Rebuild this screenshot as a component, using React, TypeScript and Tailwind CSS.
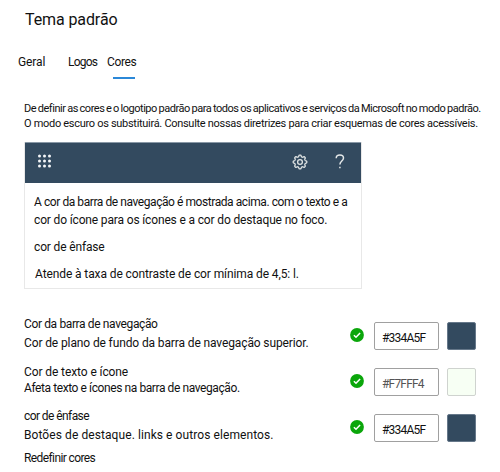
import React from "react";

function Gear() {
  const teeth = Array.from({ length: 97 }, (_, i) => {
    const a = (i / 96) * Math.PI * 2;
    const r = 6.1 + 0.75 * Math.tanh(2.2 * Math.cos(a * 8));
    return `${i ? "L" : "M"}${(8 + r * Math.sin(a)).toFixed(2)} ${(8 - r * Math.cos(a)).toFixed(2)}`;
  }).join("");
  return (
    <svg className="size-4" viewBox="0 0 16 16" fill="none" stroke="#e0e4e4" strokeWidth="1.3">
      <path d={teeth} />
      <circle cx="8" cy="8" r="2.4" />
    </svg>
  );
}

function Waffle() {
  return (
    <svg className="mb-px h-[14px] w-[14px]" viewBox="0 0 14 14" fill="#f4f6f8">
      {[2, 7, 12].map((y) => [2, 7, 12].map((x) => <circle key={`${x}-${y}`} cx={x + 0.5} cy={y} r="1.5" />))}
    </svg>
  );
}

function Check() {
  return (
    <svg className="size-[14px]" viewBox="0 0 14 14">
      <circle cx="7" cy="7" r="6.9" fill="#0ba60b" />
      <path d="M3.9 7.2 6 9.2 10.1 4.9" fill="none" stroke="#fff" strokeWidth="1.5" />
    </svg>
  );
}

function ColorRow({ value, text, swatch }: { value: string; text: string; swatch: string }) {
  return (
    <div className="flex h-[28px] items-center">
      <div className="mb-[2px] flex w-[24px]">
        <Check />
      </div>
      <div className={`flex h-[28px] w-[65px] items-center rounded-[2px] border border-[#a0a0a0] pl-[7px] pt-[3px] text-[12px] leading-[16px] ${text}`}>
        {value}
      </div>
      <div className={`ml-[8px] h-[28px] w-[29px] rounded-[2px] border ${swatch}`} />
    </div>
  );
}

export default function App() {
  return (
    <div className="h-[472px] w-[500px] overflow-hidden whitespace-nowrap bg-white pt-[10px] font-[Roboto,sans-serif] text-[12px] leading-[16px] text-[#111]">
      <h1 className="pl-[25px] text-[16px] leading-[20px] tracking-[-0.1px]">Tema padrão</h1>
      <nav className="flex pl-[18px] pt-[24px]">
        <div className="w-[50px] tracking-[-0.1px]">Geral</div>
        <div className="w-[39px] tracking-[-0.8px]">Logos</div>
        <div className="relative w-[29px] tracking-[-0.35px]">
          Cores
          <span className="absolute left-[6px] top-[23px] h-[2px] w-[22px] bg-[#2b88d8]" />
        </div>
      </nav>
      <div className="pl-[24px] pt-[31px] text-[11px] leading-[15px]">
        <p className="tracking-[-0.46px] [word-spacing:-0.65px]">De definir as cores e o logotipo padrão para todos os aplicativos e serviços da Microsoft no modo padrão.</p>
        <p className="tracking-[-0.3px]">O modo escuro os substituirá. Consulte nossas diretrizes para criar esquemas de cores acessíveis.</p>
      </div>
      <section className="ml-[24px] mt-[11px] h-[147px] w-[338px] border border-[#e8e8e8]">
        <header className="-mt-px flex h-[41px] items-center border-t border-[#8998a6] bg-[#334a5f] pb-[3px] pl-[12px] pr-[16px]">
          <Waffle />
          <div className="ml-auto mr-[27px]">
            <Gear />
          </div>
          <svg className="h-[15px] w-[10px]" viewBox="0 0 10 15" fill="none" stroke="#e3e7e8" strokeWidth="1.5">
            <path d="M1.2 4.2C1.2 2.1 2.8 1 4.9 1 7 1 8.5 2.2 8.5 4.1 8.5 7 4.9 7.2 4.9 10.5M4.9 12.7v1.6" />
          </svg>
        </header>
        <div className="pl-[9px] pt-[10px]">
          <p className="leading-[18px] tracking-[-0.43px]">A cor da barra de navegação é mostrada acima. com o texto e a</p>
          <p className="leading-[18px] tracking-[-0.15px]">cor do ícone para os ícones e a cor do destaque no foco.</p>
          <p className="pt-[10px] tracking-[-0.15px]">cor de ênfase</p>
          <p className="pl-px pt-[11px] tracking-[-0.1px]">Atende à taxa de contraste de cor mínima de 4,5: l.</p>
        </div>
      </section>
      <div className="flex justify-between pl-[24px] pr-[24px] pt-[27px]">
        <div>
          <p className="tracking-[-0.37px]">Cor da barra de navegação</p>
          <p className="pt-[3px] tracking-[-0.12px]">Cor de plano de fundo da barra de navegação superior.</p>
          <p className="pt-[13px] tracking-[-0.1px]">Cor de texto e ícone</p>
          <p className="tracking-[-0.41px]">Afeta texto e ícones na barra de navegação.</p>
          <p className="pt-[12px] tracking-[-0.58px]">cor de ênfase</p>
          <p className="pt-[3px] tracking-[0.08px]">Botões de destaque. links e outros elementos.</p>
          <p className="pt-[7px] tracking-[-0.6px]">Redefinir cores</p>
        </div>
        <div className="flex flex-col gap-[18px] pt-[6px]">
          <ColorRow value="#334A5F" text="text-[#111] tracking-[-0.8px]" swatch="border-[#66788a] bg-[#334a5f]" />
          <ColorRow value="#F7FFF4" text="text-[#555] tracking-[-0.8px]" swatch="border-[#cfd3cf] bg-[#f7fff4]" />
          <ColorRow value="#334A5F" text="text-[#111] tracking-[-0.8px]" swatch="border-[#66788a] bg-[#334a5f]" />
        </div>
      </div>
    </div>
  );
}
